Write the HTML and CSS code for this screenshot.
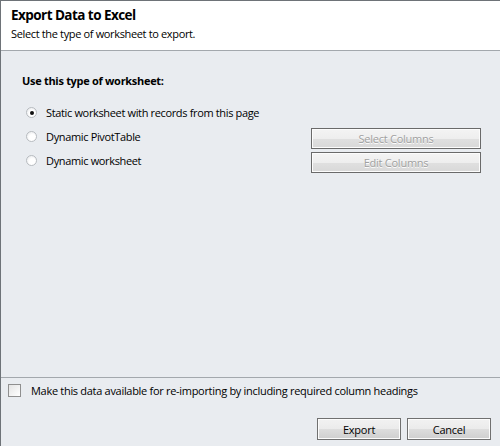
FILE: index.html
```html
<!DOCTYPE html>
<html>
<head>
<meta charset="utf-8">
<link rel="stylesheet" href="styles.css">
</head>
<body>
<div class="dialog">
  <div class="header">
    <div class="title">Export Data to Excel</div>
    <div class="subtitle">Select the type of worksheet to export.</div>
  </div>
  <div class="main">
    <div class="section-label">Use this type of worksheet:</div>
    <div class="options">
      <div class="row">
        <label class="opt"><span class="radio checked"></span><span>Static worksheet with records from this page</span></label>
      </div>
      <div class="row">
        <label class="opt"><span class="radio"></span><span>Dynamic PivotTable</span></label>
        <button class="btn disabled wide">Select Columns</button>
      </div>
      <div class="row">
        <label class="opt"><span class="radio"></span><span>Dynamic worksheet</span></label>
        <button class="btn disabled wide">Edit Columns</button>
      </div>
    </div>
  </div>
  <div class="footer">
    <label class="check-row"><span class="checkbox"></span><span>Make this data available for re-importing by including required column headings</span></label>
    <div class="actions">
      <button class="btn">Export</button>
      <button class="btn">Cancel</button>
    </div>
  </div>
</div>
</body>
</html>
```
FILE: styles.css
```css
html, body {
  margin: 0;
  padding: 0;
  background: #e9ecf0;
}
body {
  font-family: "Open Sans", "Noto Sans", sans-serif;
  font-size: 11px;
  color: #000;
}
.dialog {
  width: 499px;
  height: 445px;
  border-top: 1px solid #6e7378;
  border-left: 1px solid #6e7378;
  display: flex;
  flex-direction: column;
  background: #e9ecf0;
}
.header {
  background: #fff;
  height: 50px;
  box-sizing: border-box;
  padding: 4px 0 0 10px;
  border-bottom: 1px solid #a3a8ad;
}
.title {
  font-weight: bold;
  font-size: 13.5px;
  line-height: 20px;
  letter-spacing: -0.55px;
}
.subtitle {
  font-size: 11px;
  line-height: 17px;
  letter-spacing: -0.35px;
}
.main {
  flex: 1;
  padding: 22px 0 0 21px;
  box-sizing: border-box;
}
.section-label {
  font-weight: bold;
  font-size: 11px;
  line-height: 16px;
  letter-spacing: -0.3px;
}
.options {
  margin-top: 11px;
  display: flex;
  flex-direction: column;
}
.row {
  display: flex;
  align-items: center;
  justify-content: space-between;
  height: 24px;
  padding-right: 19px;
}
.opt {
  display: flex;
  align-items: center;
  letter-spacing: -0.35px;
}
.radio {
  width: 11px;
  height: 11px;
  border-radius: 50%;
  box-sizing: border-box;
  border: 1px solid #b8bcc0;
  background: radial-gradient(circle at 60% 65%, #ffffff 40%, #e2e4e7 100%);
  margin: 0 9px 0 4px;
  position: relative;
}
.radio.checked::after {
  content: "";
  position: absolute;
  left: 3px;
  top: 3px;
  width: 4px;
  height: 4px;
  border-radius: 50%;
  background: #111;
}
.btn {
  font-family: inherit;
  font-size: 11px;
  letter-spacing: -0.25px;
  height: 22px;
  width: 84px;
  border: 1px solid #707070;
  box-shadow: inset 0 0 0 1px #fcfcfc;
  background: linear-gradient(#f2f2f2 0%, #ebebeb 50%, #dddddd 51%, #cfcfcf 100%);
  color: #000;
  padding: 0;
  margin: 0;
}
.btn.wide {
  width: 170px;
  height: 21px;
  margin-top: 4px;
}
.btn.disabled {
  color: #a0a0a0;
  text-shadow: 0 1px 0 #fff;
  border-color: #6a6a6a;
  background: linear-gradient(#f4f4f4 0%, #eeeeee 50%, #e0e0e0 51%, #d8d8d8 100%);
}
.footer {
  border-top: 1px solid #a3a8ad;
  height: 69px;
  box-sizing: border-box;
  display: flex;
  flex-direction: column;
}
.check-row {
  display: flex;
  align-items: center;
  padding: 5px 0 0 7px;
  height: 14px;
  letter-spacing: -0.3px;
}
.checkbox {
  width: 13px;
  height: 13px;
  box-sizing: border-box;
  border: 1px solid #8f8f8f;
  background: linear-gradient(135deg, #e4e4e4, #ffffff);
  margin-right: 10px;
}
.actions {
  display: flex;
  justify-content: flex-end;
  gap: 6px;
  padding: 21px 9px 0 0;
}
```
